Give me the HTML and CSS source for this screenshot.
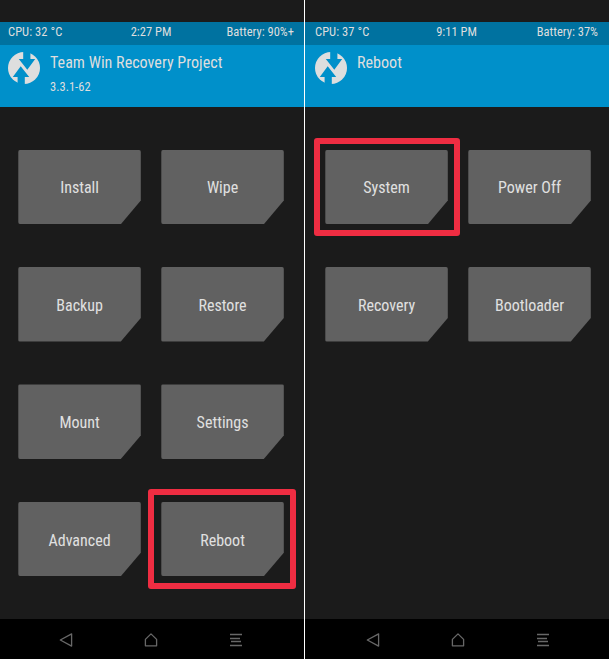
FILE: index.html
```html
<!DOCTYPE html>
<html lang="en">
<head>
<meta charset="utf-8">
<title>Team Win Recovery Project</title>
<link rel="stylesheet" href="styles.css">
</head>
<body>
<main class="screens">
  <section class="phone">
    <div class="status"><span>CPU: 32 °C</span><span>2:27 PM</span><span>Battery: 90%+</span></div>
    <header class="header">
      <svg class="logo" viewBox="0 0 32 32"><circle class="disc" cx="16" cy="16" r="16"/><path class="cut" d="M15.2-1V7H10.8L19.3 17.8L27.2 7H22.4V-1ZM16.8 33V25H21.2L12.7 14.2L4.8 25H9.6V33Z"/></svg>
      <div class="titles"><h1>Team Win Recovery Project</h1><p>3.3.1-62</p></div>
    </header>
    <div class="grid">
      <div class="cell"><button class="tile">Install</button></div>
      <div class="cell"><button class="tile">Wipe</button></div>
      <div class="cell"><button class="tile">Backup</button></div>
      <div class="cell"><button class="tile">Restore</button></div>
      <div class="cell"><button class="tile">Mount</button></div>
      <div class="cell"><button class="tile">Settings</button></div>
      <div class="cell"><button class="tile">Advanced</button></div>
      <div class="cell marked mark-reboot"><button class="tile">Reboot</button></div>
    </div>
    <nav class="nav">
      <svg viewBox="0 0 14 14"><path d="M12.6 .9V13.1L1.3 7Z"/></svg>
      <svg viewBox="0 0 14 14"><path d="M1.4 6.4L7 .9L12.6 6.4V12.8H1.4Z"/></svg>
      <svg viewBox="0 0 14 14"><path d="M1 1.5H13M1 5.5H11M2 8.5H12M1 12.5H13"/></svg>
    </nav>
  </section>
  <section class="phone phone-right">
    <div class="status"><span>CPU: 37 °C</span><span>9:11 PM</span><span>Battery: 37%</span></div>
    <header class="header">
      <svg class="logo" viewBox="0 0 32 32"><circle class="disc" cx="16" cy="16" r="16"/><path class="cut" d="M15.2-1V7H10.8L19.3 17.8L27.2 7H22.4V-1ZM16.8 33V25H21.2L12.7 14.2L4.8 25H9.6V33Z"/></svg>
      <div class="titles"><h1>Reboot</h1></div>
    </header>
    <div class="grid">
      <div class="cell marked mark-system"><button class="tile">System</button></div>
      <div class="cell"><button class="tile">Power Off</button></div>
      <div class="cell"><button class="tile">Recovery</button></div>
      <div class="cell"><button class="tile">Bootloader</button></div>
    </div>
    <nav class="nav">
      <svg viewBox="0 0 14 14"><path d="M12.6 .9V13.1L1.3 7Z"/></svg>
      <svg viewBox="0 0 14 14"><path d="M1.4 6.4L7 .9L12.6 6.4V12.8H1.4Z"/></svg>
      <svg viewBox="0 0 14 14"><path d="M1 1.5H13M1 5.5H11M2 8.5H12M1 12.5H13"/></svg>
    </nav>
  </section>
</main>
</body>
</html>
```
FILE: styles.css
```css
* { box-sizing: border-box; }

body {
  margin: 0;
  background: #1b1b1b;
  color: #dedede;
  font-family: "Roboto Condensed", Roboto, sans-serif;
  font-stretch: 75%;
}

.screens {
  display: grid;
  grid-template-columns: 304px 305px;
  height: 659px;
}

.phone {
  --inset: 0px;
  display: flex;
  flex-direction: column;
  padding-top: 22px;
}

.phone-right {
  --inset: 2px;
  border-left: 1px solid #fff;
}

.status {
  display: grid;
  grid-template-columns: 1fr 60px 1fr;
  height: 23px;
  padding: 0 10px 0 calc(8px + var(--inset));
  background: #0072a0;
  font-size: 12.5px;
  line-height: 20px;
  white-space: nowrap;
}
.phone-right .status { padding-right: 11px; }
.status span:first-child { letter-spacing: .05px; }
.status span:nth-child(2) { text-align: center; }
.status span:last-child { text-align: right; }

.header {
  display: flex;
  height: 62px;
  padding-left: calc(8px + var(--inset));
  background: #0090ca;
}
.logo { width: 32px; height: 32px; margin: 7px 10px 0 0; }
.disc { fill: #dedede; }
.cut { fill: #0090ca; }
.titles { padding-top: 8px; white-space: nowrap; }
h1 { margin: 0; font-size: 16.1px; font-weight: 400; line-height: 20px; }
.titles p { margin: 4px 0 0; font-size: 12.5px; line-height: 19px; }

.grid {
  display: grid;
  grid-template-columns: 122.5px 122.5px;
  grid-auto-rows: 74.6px;
  gap: 42.8px 20.5px;
  padding: 42.6px 0 0 calc(18.3px + var(--inset));
}
.cell { position: relative; }
.tile {
  display: block;
  width: 100%;
  height: 100%;
  padding: 2px 0 0;
  border: 0;
  border-radius: 2px;
  background: #616161;
  color: #e0e0e0;
  font: inherit;
  font-size: 16px;
  clip-path: polygon(0 0, 100% 0, 100% 51px, 102.5px 100%, 0 100%);
}
.marked::after {
  content: "";
  position: absolute;
  border: 6px solid #ef2d42;
  border-radius: 3px;
}
.mark-reboot::after { inset: -12.5px -12px -12.7px -13px; }
.mark-system::after { inset: -12px -12.5px -11.7px -11px; }

.nav {
  display: grid;
  grid-template-columns: repeat(3, 14px);
  gap: 71px;
  height: 40px;
  margin-top: auto;
  padding: 14px 0 0 calc(59px + var(--inset));
  background: #000;
}
.nav svg {
  width: 14px;
  height: 14px;
  fill: none;
  stroke: #686868;
  stroke-width: 1.3;
  stroke-linejoin: round;
}
```
